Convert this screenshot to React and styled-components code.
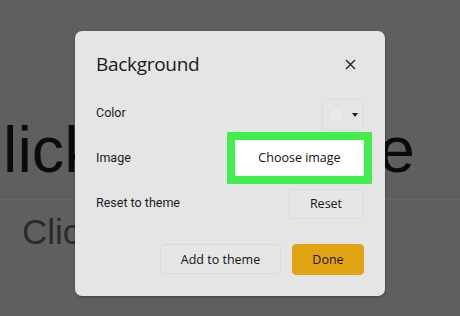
import React from "react";
import styled, { createGlobalStyle } from "styled-components";

const GlobalStyle = createGlobalStyle`
  html, body {
    margin: 0;
    padding: 0;
    background: #5f5f5f;
    overflow: hidden;
  }
  * { box-sizing: border-box; }
`;

const Stage = styled.div`
  position: relative;
  width: 460px;
  height: 316px;
  overflow: hidden;
  background: #5f5f5f;
  font-family: Roboto, "Liberation Sans", Arial, sans-serif;
`;

const Slide = styled.div`
  display: flex;
  flex-direction: column;
  padding-top: 110px;
`;

const SlideTitle = styled.div`
  font-family: "Liberation Sans", Arial, sans-serif;
  font-size: 65px;
  line-height: 80px;
  color: #0b0b0b;
  white-space: nowrap;
  margin-left: -44px;
  height: 90px;
  border-bottom: 1px solid #666;
`;

const SlideSub = styled.div`
  font-family: "Liberation Sans", Arial, sans-serif;
  font-size: 35px;
  color: #2a2a2a;
  white-space: nowrap;
  padding: 12px 0 0 22px;
`;

const Dialog = styled.div`
  position: absolute;
  left: 75px;
  top: 31px;
  width: 310px;
  height: 265px;
  background: #e5e5e5;
  border-radius: 7px;
  padding: 18px 22px 0 21px;
  display: flex;
  flex-direction: column;
  box-shadow: 0 1px 3px rgba(0, 0, 0, 0.3);
`;

const Header = styled.div`
  display: flex;
  justify-content: space-between;
  align-items: center;
  height: 30px;
  margin-bottom: 11px;
`;

const Title = styled.h2`
  margin: 0;
  font-family: "Open Sans", Roboto, sans-serif;
  font-weight: 400;
  font-size: 19px;
  letter-spacing: -0.3px;
  color: #1a1a1a;
`;

const Close = styled.button`
  border: 0;
  background: none;
  padding: 0;
  width: 20px;
  height: 20px;
  margin-right: 3px;
  display: flex;
  align-items: center;
  justify-content: center;
`;

const Row = styled.div`
  display: flex;
  justify-content: space-between;
  align-items: center;
  height: 45px;
`;

const Label = styled.span`
  font-size: 12.5px;
  color: #1c1c1c;
`;

const Swatch = styled.div`
  width: 41px;
  height: 32px;
  margin-top: 4px;
  border: 1px solid #dcdcdc;
  border-radius: 4px;
  background: #e6e6e6;
  display: flex;
  align-items: center;
  padding-left: 5px;
  gap: 7px;
`;

const Dot = styled.div`
  width: 17px;
  height: 17px;
  border-radius: 50%;
  background: #e9e9e9;
  border: 1px solid #dedede;
`;

const Caret = styled.div`
  width: 0;
  height: 0;
  border-left: 3.5px solid transparent;
  border-right: 3.5px solid transparent;
  border-top: 4px solid #222;
`;

const Button = styled.button`
  font-family: "Open Sans", Roboto, sans-serif;
  font-size: 12.5px;
  font-weight: 500;
  color: #141414;
  height: ${(p) => p.$h || 30}px;
  width: ${(p) => p.$w}px;
  border-radius: ${(p) => (p.$highlight ? 0 : 4)}px;
  border: 1px solid ${(p) => (p.$primary ? "#e2a411" : p.$white ? "#fff" : "#dadada")};
  background: ${(p) => (p.$primary ? "#e2a411" : p.$white ? "#ffffff" : "#e6e6e6")};
  outline: ${(p) => (p.$highlight ? "8px solid #41ee4b" : "none")};
  padding: 0;
  margin-top: ${(p) => p.$mt || 0}px;
  margin-right: ${(p) => p.$mr || 0}px;
`;

const Footer = styled.div`
  display: flex;
  justify-content: flex-end;
  gap: 11px;
  margin-top: 19px;
`;

export default function App() {
  return (
    <Stage>
      <GlobalStyle />
      <Slide>
        <SlideTitle>Click to add title</SlideTitle>
        <SlideSub>Click to add subtitle</SlideSub>
      </Slide>
      <Dialog>
        <Header>
          <Title>Background</Title>
          <Close aria-label="Close">
            <svg width="11" height="11" viewBox="0 0 11 11">
              <path d="M1 1L10 10M10 1L1 10" stroke="#222" strokeWidth="1.4" />
            </svg>
          </Close>
        </Header>
        <Row>
          <Label>Color</Label>
          <Swatch>
            <Dot />
            <Caret />
          </Swatch>
        </Row>
        <Row>
          <Label>Image</Label>
          <Button $white $highlight $w={129} $h={36} $mr={-1}>
            Choose image
          </Button>
        </Row>
        <Row>
          <Label>Reset to theme</Label>
          <Button $w={74} $mt={2}>
            Reset
          </Button>
        </Row>
        <Footer>
          <Button $w={121}>Add to theme</Button>
          <Button $primary $w={72} $h={31} $mr={-1}>
            Done
          </Button>
        </Footer>
      </Dialog>
    </Stage>
  );
}
